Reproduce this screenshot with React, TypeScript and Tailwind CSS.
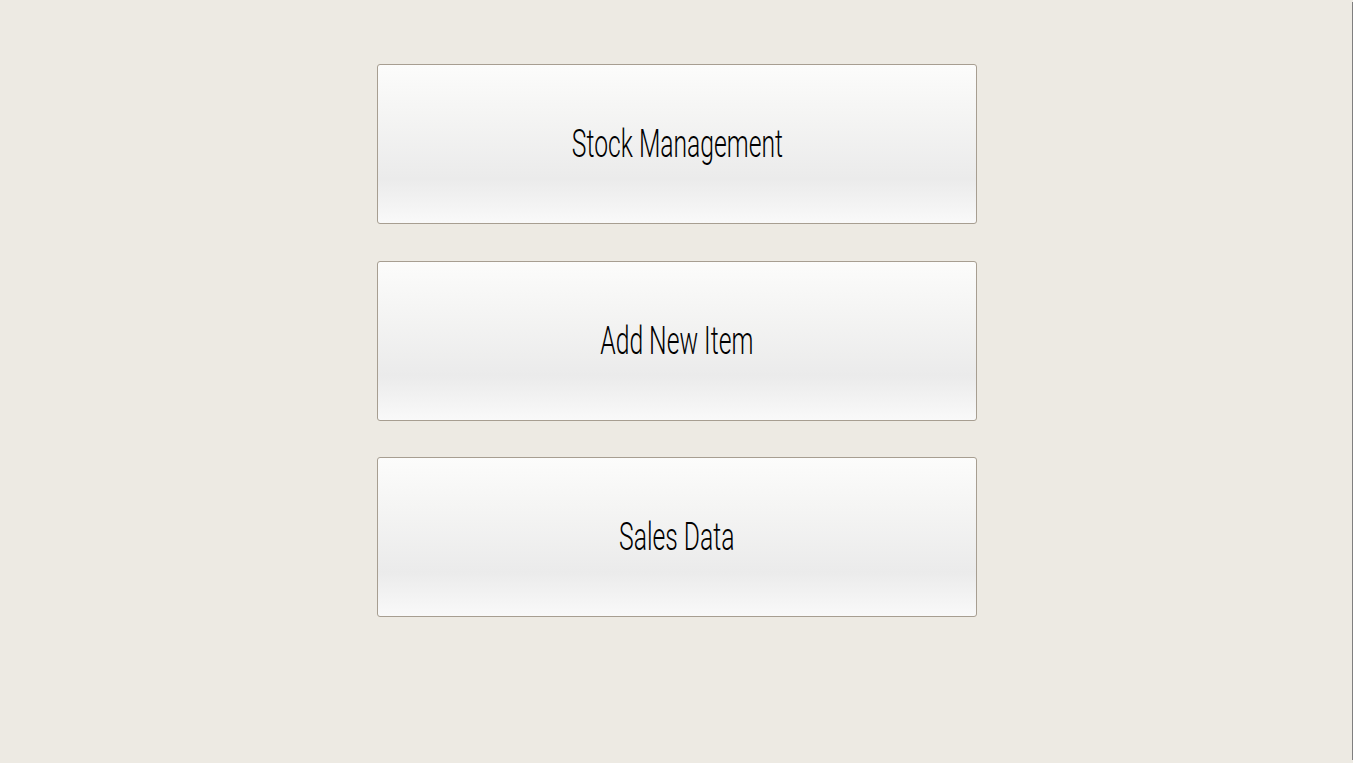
import React from "react";

const items = [
  { t: "Stock Management", m: "mt-0" },
  { t: "Add New Item", m: "mt-[37px]" },
  { t: "Sales Data", m: "mt-[36px]" },
];

export default function App() {
  return (
    <div className="w-[1353px] h-[763px] bg-[#edeae3] flex">
      <div className="w-[1352px] h-full flex flex-col items-center pt-[64px] pl-[2px]">
        {items.map(({ t, m }) => (
          <div
            key={t}
            className={`${m} w-[600px] h-[160px] shrink-0 rounded-[3px] border border-[#a79e91] bg-[linear-gradient(to_bottom,#fcfcfb_0%,#f5f5f4_30%,#ebebeb_72%,#f9f9f9_100%)] flex items-center justify-center`}
          >
            <span
              className="text-[38px] leading-none text-black scale-x-[0.65] whitespace-nowrap inline-block"
              style={{ fontFamily: "Roboto, 'Liberation Sans', sans-serif", fontWeight: 300 }}
            >
              {t}
            </span>
          </div>
        ))}
      </div>
      <div className="w-px h-[758px] mt-[2px] bg-[#7f7f7f]" />
    </div>
  );
}
